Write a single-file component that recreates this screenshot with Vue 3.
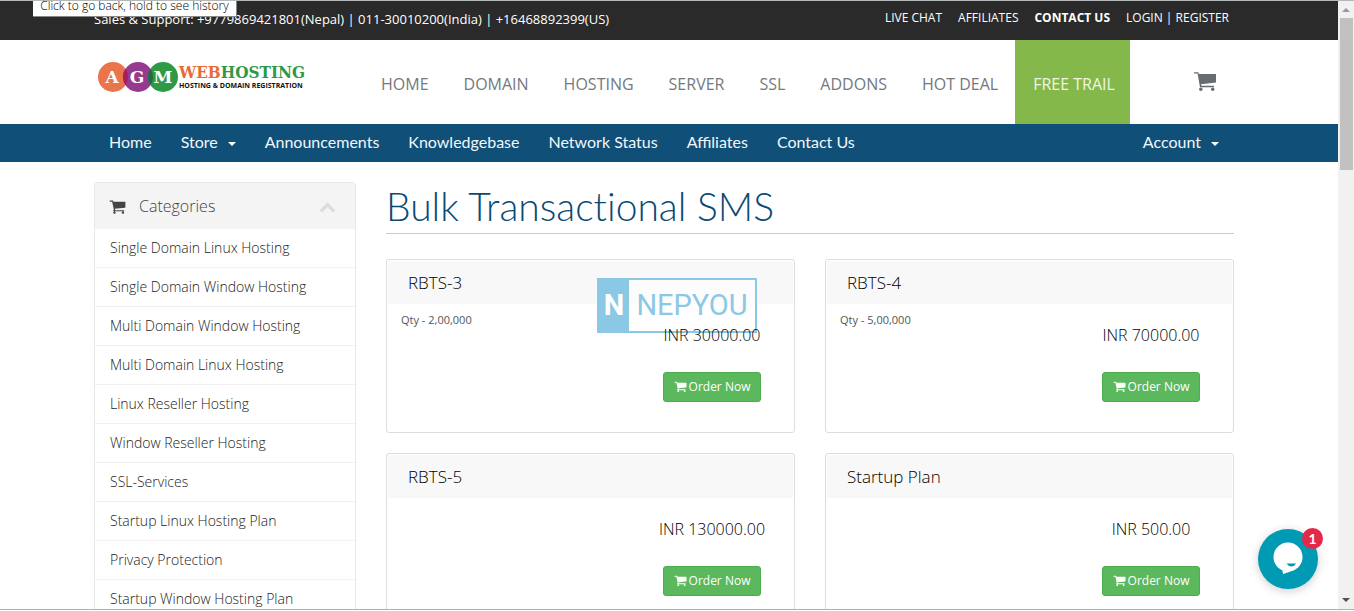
<script setup>
const topLinks = [
  { label: 'LIVE CHAT' },
  { label: 'AFFILIATES' },
  { label: 'CONTACT US', strong: true },
  { label: 'LOGIN | REGISTER' },
]
const mainLinks = ['HOME', 'DOMAIN', 'HOSTING', 'SERVER', 'SSL', 'ADDONS', 'HOT DEAL']
const subLinks = ['Home', 'Store', 'Announcements', 'Knowledgebase', 'Network Status', 'Affiliates', 'Contact Us']
const categories = [
  'Single Domain Linux Hosting',
  'Single Domain Window Hosting',
  'Multi Domain Window Hosting',
  'Multi Domain Linux Hosting',
  'Linux Reseller Hosting',
  'Window Reseller Hosting',
  'SSL-Services',
  'Startup Linux Hosting Plan',
  'Privacy Protection',
  'Startup Window Hosting Plan',
]
const products = [
  { name: 'RBTS-3', qty: 'Qty - 2,00,000', price: 'INR 30000.00' },
  { name: 'RBTS-4', qty: 'Qty - 5,00,000', price: 'INR 70000.00' },
  { name: 'RBTS-5', qty: '', price: 'INR 130000.00' },
  { name: 'Startup Plan', qty: '', price: 'INR 500.00' },
]
const cartPath =
  'M704 1536q0 52-38 90t-90 38-90-38-38-90 38-90 90-38 90 38 38 90zm896 0q0 52-38 90t-90 38-90-38-38-90 38-90 90-38 90 38 38 90zm128-1088v512q0 24-16.5 42.5t-40.5 21.5l-1044 122q13 60 13 70 0 16-24 64h920q26 0 45 19t19 45-19 45-45 19h-1024q-26 0-45-19t-19-45q0-11 8-31.5t16-36 21.5-40 15.5-29.5l-177-823h-204q-26 0-45-19t-19-45 19-45 45-19h256q16 0 28.5 6.5t19.5 15.5 13 24.5 8 26 5.5 29.5 4.5 26h1201q26 0 45 19t19 45z'
</script>

<template>
  <div class="window">
    <div class="page">
      <div class="topbar">
        <span class="support">Sales &amp; Support: +9779869421801(Nepal) | 011-30010200(India) | +16468892399(US)</span>
        <nav class="toplinks" aria-label="Account links">
          <a v-for="l in topLinks" :key="l.label" href="#" :class="{ strong: l.strong }">{{ l.label }}</a>
        </nav>
      </div>

      <header class="header">
        <a href="#" class="logo" aria-label="AGM Web Hosting">
          <svg class="discs" viewBox="0 0 80 32" aria-hidden="true">
            <circle cx="15" cy="16" r="15" fill="#ea754b" />
            <circle cx="40" cy="16" r="15" fill="#963a8f" />
            <circle cx="65" cy="16" r="15" fill="#2f9946" />
            <path d="M27.500 7.700a15 15 0 0 1 0 16.600a15 15 0 0 1 0-16.600z" fill="#a81d5b" />
            <path d="M52.500 7.700a15 15 0 0 1 0 16.600a15 15 0 0 1 0-16.600z" fill="#24693f" />
            <g class="initials">
              <text x="14" y="22">A</text>
              <text x="39" y="22">G</text>
              <text x="65" y="22">M</text>
            </g>
          </svg>
          <span class="logotext">
            <span class="brand"><span class="web">WEB</span>HOSTING</span>
            <span class="tagline">HOSTING &amp; DOMAIN REGISTRATION</span>
          </span>
        </a>
        <nav class="mainnav" aria-label="Main">
          <a v-for="l in mainLinks" :key="l" href="#">{{ l }}</a>
          <a href="#" class="trial">FREE TRAIL</a>
        </nav>
        <a href="#" class="cartlink" aria-label="Cart">
          <svg viewBox="0 0 22 19" aria-hidden="true">
            <path d="M0 .3h4.200l.9 1.700H22v8.500L7 12.200l.5 1.600H20v1.400H6L3.600 1.600H0z" />
            <circle cx="6.800" cy="17.300" r="1.700" />
            <circle cx="18.700" cy="17.300" r="1.700" />
          </svg>
        </a>
      </header>

      <nav class="subnav" aria-label="Client area">
        <a v-for="l in subLinks" :key="l" href="#">{{ l }}<i v-if="l === 'Store'" class="caret"></i></a>
        <a href="#" class="account">Account<i class="caret"></i></a>
      </nav>

      <div class="content">
        <aside class="sidebar">
          <h2>
            <svg class="fa" viewBox="0 0 1792 1792" aria-hidden="true"><path :d="cartPath" /></svg>
            <span>Categories</span>
            <svg class="chevron" viewBox="0 0 1792 1792" aria-hidden="true">
              <path d="M1683 1331l-166 165q-19 19-45 19t-45-19l-531-531-531 531q-19 19-45 19t-45-19l-166-165q-19-19-19-45.500t19-45.500l742-741q19-19 45-19t45 19l742 741q19 19 19 45.500t-19 45.500z" />
            </svg>
          </h2>
          <a v-for="c in categories" :key="c" href="#">{{ c }}</a>
        </aside>

        <main class="main">
          <h1>Bulk Transactional SMS</h1>
          <div class="products">
            <article v-for="(p, i) in products" :key="p.name" class="card">
              <h3>{{ p.name }}</h3>
              <div class="cardbody">
                <p class="qty">{{ p.qty }}</p>
                <div class="buy">
                  <p class="price">{{ p.price }}</p>
                  <button type="button">
                    <svg class="fa" viewBox="0 0 1792 1792" aria-hidden="true"><path :d="cartPath" /></svg>
                    Order Now
                  </button>
                </div>
              </div>
              <div v-if="i === 0" class="watermark">
                <span class="mark">N</span><span class="word">NEPYOU</span>
              </div>
            </article>
          </div>
        </main>
      </div>

      <button type="button" class="chat" aria-label="Open chat">
        <svg viewBox="0 0 60 60" aria-hidden="true">
          <circle cx="30" cy="28" r="14.500" fill="#fff" />
          <path d="M24 38l1 7q6-1 11-5z" fill="#fff" />
          <path d="M28.500 34.500h9.500q-1.500 3-4.500 3t-5-3z" fill="#019ab4" />
        </svg>
        <span class="badge">1</span>
      </button>
    </div>

    <div class="scrollbar" aria-hidden="true">
      <i class="up"></i>
      <i class="thumb"></i>
      <i class="down"></i>
    </div>
    <div class="tooltip" role="tooltip">Click to go back, hold to see history</div>
  </div>
</template>

<style>
body {
  margin: 0;
  background: #fff;
}
</style>

<style scoped>
* {
  box-sizing: border-box;
}
a {
  color: inherit;
  text-decoration: none;
}
h1, h2, h3, p {
  margin: 0;
  font-weight: 400;
}
.window {
  position: relative;
  display: grid;
  grid-template-columns: 1fr 16px;
  height: calc(100vh - 1px);
  border-top: 1px solid #b5b8b8;
  border-bottom: 1px solid #b0b0b0;
  overflow: hidden;
  font-family: "Open Sans", "Noto Sans", sans-serif;
  color: #333;
}
.page {
  position: relative;
  overflow: hidden;
  min-width: 0;
}
.topbar {
  display: flex;
  justify-content: space-between;
  height: 39px;
  padding: 0 109px 0 94px;
  background: #2a2a2a;
  color: #fff;
}
.support {
  font-size: 13px;
  line-height: 36px;
}
.toplinks {
  display: flex;
  gap: 16px;
  font-size: 12px;
  line-height: 34px;
}
.strong {
  font-weight: 700;
}
.header {
  display: flex;
  height: 84px;
  padding: 0 122px 0 98px;
}
.logo {
  display: flex;
  align-items: center;
  width: 265px;
  padding-bottom: 10px;
}
.discs {
  width: 80px;
  height: 32px;
}
.initials {
  fill: #fff;
  font: 700 17px "DejaVu Serif", serif;
  text-anchor: middle;
}
.logotext {
  display: flex;
  flex-direction: column;
  padding-left: 1px;
}
.brand {
  font: 700 17px/18px "DejaVu Serif Condensed", "DejaVu Serif", serif;
  color: #2f9946;
}
.web {
  color: #ea6a35;
}
.tagline {
  font-size: 7px;
  line-height: 10px;
  font-weight: 700;
  color: #111;
  white-space: nowrap;
}
.mainnav {
  display: flex;
  font-size: 16px;
  line-height: 88px;
  color: #74797e;
}
.mainnav a {
  padding: 0 17px 0 18px;
  white-space: nowrap;
}
.mainnav .trial {
  padding-right: 15px;
  background: #84b84a;
  color: #eef6e4;
}
.cartlink {
  margin: 32px 0 0 auto;
  fill: #666c70;
}
.cartlink svg {
  width: 22px;
  height: 19px;
}
.subnav {
  display: flex;
  gap: 29px;
  height: 38px;
  padding: 0 119px 0 109px;
  background: #0f4f78;
  color: #f2f7fa;
  font-family: Lato, sans-serif;
  font-size: 16px;
  line-height: 36px;
}
.account {
  margin-left: auto;
}
.caret {
  display: inline-block;
  margin-left: 10px;
  border: 4px solid transparent;
  border-top-color: #fff;
  border-bottom: 0;
  vertical-align: middle;
}
.content {
  display: flex;
  gap: 30px;
  padding: 20px 104px 0 94px;
}
.sidebar {
  width: 262px;
  flex: none;
  border: 1px solid #e8e8e8;
  border-radius: 3px;
}
.sidebar h2 {
  display: flex;
  align-items: center;
  height: 46px;
  padding: 0 19px 0 14px;
  background: #f4f4f4;
  color: #444;
  font-size: 16px;
  font-weight: 300;
}
.sidebar h2 .fa {
  width: 17px;
  height: 17px;
  margin-right: 13px;
  fill: #444;
}
.chevron {
  width: 17px;
  height: 17px;
  margin-left: auto;
  fill: #ddd;
}
.sidebar a {
  display: block;
  height: 39px;
  padding-left: 15px;
  border-bottom: 1px solid #f0f0f0;
  color: #222;
  font-size: 14px;
  font-weight: 300;
  line-height: 38px;
}
.main {
  flex: 1;
  min-width: 0;
}
.main h1 {
  height: 52px;
  margin-bottom: 25px;
  border-bottom: 1px solid #ccc;
  color: #0a4a74;
  font-family: Lato, sans-serif;
  font-size: 39px;
  font-weight: 300;
  font-variant-ligatures: none;
  line-height: 48px;
}
.products {
  display: grid;
  grid-template-columns: 1fr 1fr;
  gap: 20px 30px;
}
.card {
  position: relative;
  height: 174px;
  padding: 1px;
  border: 1px solid #ddd;
  border-radius: 3px;
}
.card h3 {
  height: 43px;
  padding-left: 20px;
  background: #f8f8f8;
  color: #000;
  font-size: 17px;
  font-weight: 300;
  line-height: 43px;
}
.cardbody {
  display: flex;
}
.qty {
  flex: 1;
  padding: 8px 0 0 13px;
  color: #555;
  font-size: 11px;
  line-height: 16px;
}
.buy {
  display: flex;
  flex-direction: column;
  align-items: center;
  width: 40%;
  padding-top: 20px;
}
.price {
  position: relative;
  z-index: 2;
  color: #000;
  font-size: 16px;
  font-weight: 300;
  line-height: 22px;
}
.buy button {
  display: flex;
  align-items: center;
  gap: 2px;
  height: 30px;
  margin-top: 26px;
  padding: 0 10px 1px;
  border: 1px solid #4cae4c;
  border-radius: 3px;
  background: #5cb85c;
  color: #fff;
  font-family: inherit;
  font-size: 12px;
}
.buy .fa {
  width: 13px;
  height: 13px;
  fill: #fff;
}
.watermark {
  position: absolute;
  top: 18px;
  left: 210px;
  display: flex;
  width: 160px;
  height: 55px;
  border: 2px solid #8bc8e6;
  background: rgba(255, 255, 255, 0.5);
  color: #8bc8e6;
  font: 29px/51px Roboto, sans-serif;
}
.mark {
  flex: none;
  width: 30px;
  background: #8bc8e6;
  color: #fff;
  font-weight: 700;
  text-align: center;
}
.word {
  flex: 1;
  text-align: center;
}
.chat {
  position: absolute;
  right: 20px;
  bottom: 20px;
  width: 60px;
  height: 60px;
  padding: 0;
  border: 0;
  border-radius: 50%;
  background: #019ab4;
  box-shadow: 0 2px 10px rgba(0, 0, 0, 0.2);
}
.chat svg {
  display: block;
  width: 60px;
  height: 60px;
}
.badge {
  position: absolute;
  top: -1px;
  right: -5px;
  width: 21px;
  height: 21px;
  border-radius: 50%;
  background: #e3294a;
  color: #fff;
  font: 700 14px/21px Lato, sans-serif;
  text-align: center;
}
.scrollbar {
  display: flex;
  flex-direction: column;
  align-items: center;
  background: #f1f1f1;
}
.up, .down {
  border: 4px solid transparent;
}
.up {
  margin-top: 7px;
  border-top: 0;
  border-bottom-color: #999;
}
.thumb {
  width: 13px;
  height: 152px;
  margin-top: 6px;
  background: #c1c1c1;
}
.down {
  margin: auto 0 7px;
  border-bottom: 0;
  border-top-color: #505050;
}
.tooltip {
  position: absolute;
  top: -1px;
  left: 33px;
  width: 204px;
  height: 17px;
  background: #fff;
  border-right: 1px solid #888;
  border-bottom: 1px solid #888;
  color: #000;
  font-size: 12px;
  font-weight: 300;
  line-height: 12px;
  text-align: center;
  white-space: nowrap;
}
</style>
